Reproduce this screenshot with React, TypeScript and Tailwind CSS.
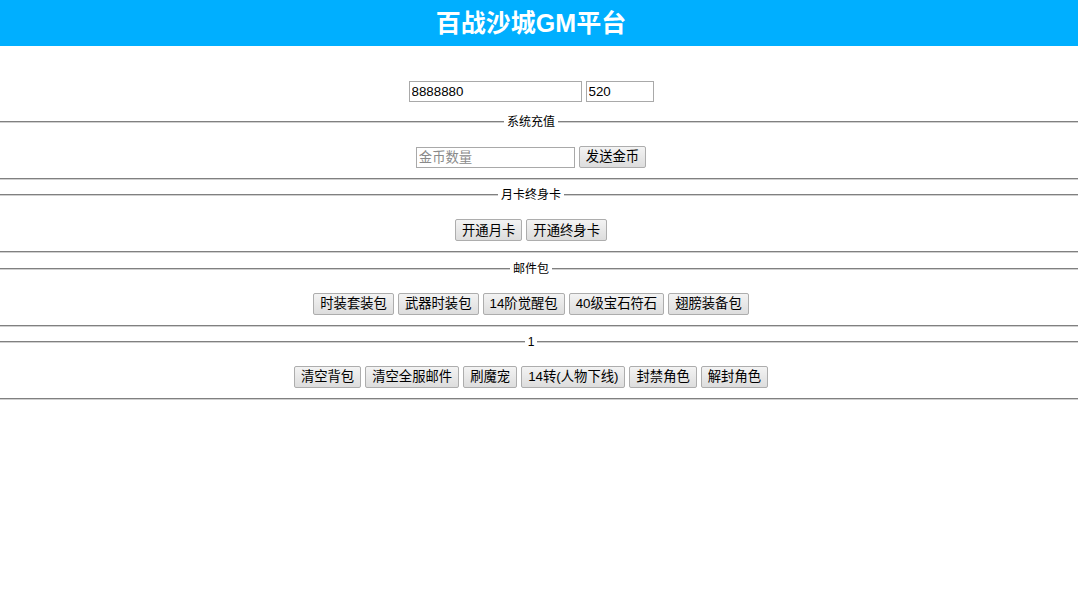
import React from "react";

const font = "font-['Liberation_Sans','Noto_Sans_CJK_SC',sans-serif]";

const sections: { title: string; items: string[] }[] = [
  { title: "月卡终身卡", items: ["开通月卡", "开通终身卡"] },
  { title: "邮件包", items: ["时装套装包", "武器时装包", "14阶觉醒包", "40级宝石符石", "翅膀装备包"] },
  { title: "1", items: ["清空背包", "清空全服邮件", "刷魔宠", "14转(人物下线)", "封禁角色", "解封角色"] },
];

const rule = "h-0 border-t border-b border-t-[#808080] border-b-[#d0d0d0]";

const Btn = ({ label }: { label: string }) => (
  <button className="h-[22px] px-[6px] text-[13.33px] leading-none text-black bg-gradient-to-b from-[#f3f3f3] to-[#dddddd] border border-[#adadad] rounded-[2px]">
    {label}
  </button>
);

// fieldset-like block, legend centered on the top rule
const Section = ({ title, children }: { title: string; children: React.ReactNode }) => (
  <div className="mb-[7.33px]">
    <div className="flex items-center h-4">
      <div className={`flex-[1_1_0px] ${rule}`} />
      <span className="px-[3px] text-[12px] leading-4 text-black">{title}</span>
      <div className={`flex-[1_1_16px] ${rule}`} />
    </div>
    <div className="pt-4 pb-[10px] pr-[16px] flex justify-center items-center gap-1">{children}</div>
    <div className={rule} />
  </div>
);

export default function App() {
  return (
    <div className={`${font} min-h-[605px] bg-white`}>
      <div className="h-[46px] pr-[16px] bg-[#00afff] flex items-center justify-center">
        <h1 className="text-white text-[25px] font-bold leading-none">百战沙城GM平台</h1>
      </div>

      <div className="mt-[35px] mb-[12px] pr-[16px] flex justify-center gap-1">
        <input
          className="w-[173px] h-[21px] px-[2px] text-[13.33px] border border-[#a9a9a9] outline-none"
          defaultValue="8888880"
        />
        <input
          className="w-[68px] h-[21px] px-[2px] text-[13.33px] border border-[#a9a9a9] outline-none"
          defaultValue="520"
        />
      </div>

      <Section title="系统充值">
        <input
          className="w-[159px] h-[21px] px-[2px] text-[13.33px] border border-[#a9a9a9] outline-none placeholder:text-[#8a8a8a]"
          placeholder="金币数量"
        />
        <Btn label="发送金币" />
      </Section>

      {sections.map((s) => (
        <Section key={s.title} title={s.title}>
          {s.items.map((it) => (
            <Btn key={it} label={it} />
          ))}
        </Section>
      ))}
    </div>
  );
}
